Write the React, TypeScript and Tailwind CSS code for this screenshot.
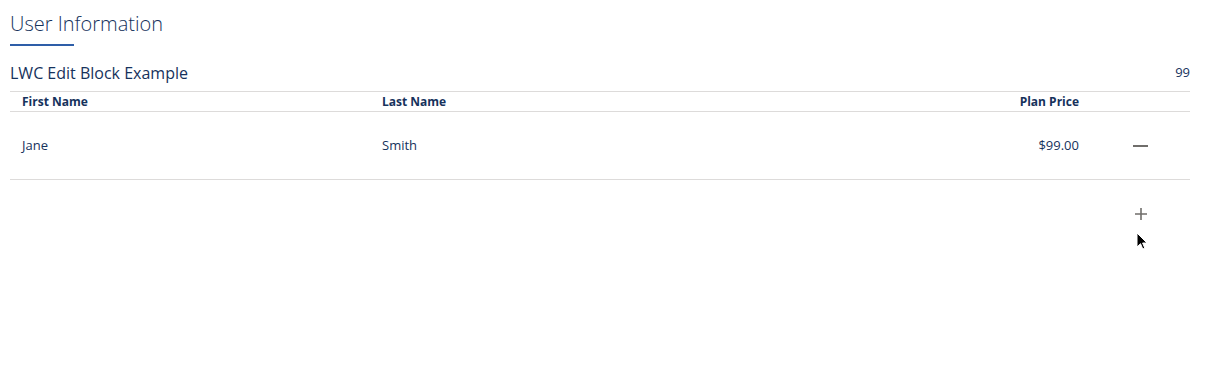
import React from 'react';

const rows = [{ first: 'Jane', last: 'Smith', price: '$99.00' }];

export default function App() {
  return (
    <div className="relative w-[1208px] h-[392px] bg-white text-[#16325c]" style={{ fontFamily: '"Open Sans", "Noto Sans", Arial, sans-serif' }}>
      <div className="pl-[10px] pt-[11px] w-[1180px] box-content">
        {/* Title */}
        <h1 className="text-[20px] leading-[26px] font-light">User Information</h1>
        <div className="w-[64px] h-[2px] bg-[#2e5ea8] mt-[7px]" />

        {/* Card header */}
        <div className="flex items-center justify-between mt-[17px] h-[20px]">
          <h2 className="text-[16px] leading-[20px]">LWC Edit Block Example</h2>
          <span className="text-[13px]">99</span>
        </div>

        {/* Table */}
        <div className="mt-[8px]">
          <div className="flex items-center h-[21px] border-y border-[#dddbda] text-[12px] font-bold">
            <div className="w-[372px] pl-[12px]">First Name</div>
            <div className="w-[360px]">Last Name</div>
            <div className="w-[337px] text-right">Plan Price</div>
            <div className="flex-1" />
          </div>
          {rows.map((r) => (
            <div key={r.first} className="flex items-center h-[68px] border-b border-[#dddbda] text-[13px]">
              <div className="w-[372px] pl-[12px]">{r.first}</div>
              <div className="w-[360px]">{r.last}</div>
              <div className="w-[337px] text-right">{r.price}</div>
              <div className="flex-1 flex justify-center pl-[12px]">
                <span className="block w-[15px] h-[2px] bg-[#706e6b]" />
              </div>
            </div>
          ))}
          <div className="flex justify-end pr-[42px] pt-[27px]">
            <svg width="14" height="14" viewBox="0 0 14 14">
              <path d="M7 1v12M1 7h12" stroke="#706e6b" strokeWidth="1.6" />
            </svg>
          </div>
        </div>
      </div>

      {/* mouse cursor */}
      <svg className="absolute left-[1136px] top-[232px]" width="12" height="19" viewBox="0 0 12 19">
        <path d="M1 1v14l3.5-3.3 2.3 5.3 2-.9-2.2-5.1H11z" fill="#000" stroke="#fff" strokeWidth="1" />
      </svg>
    </div>
  );
}
